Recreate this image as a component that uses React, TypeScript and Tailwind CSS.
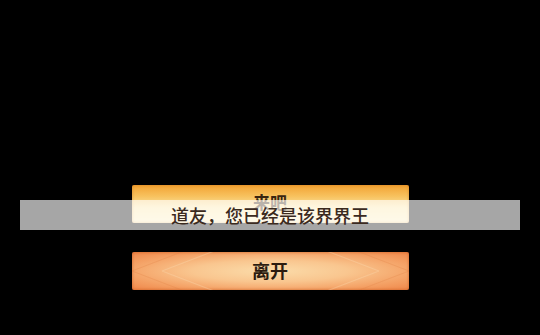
export default function App() {
  return (
    <div
      className="relative w-[540px] h-[335px] bg-black overflow-hidden"
      style={{ fontFamily: '"Noto Sans CJK SC", "Noto Sans", sans-serif' }}
    >
      {/* dialog buttons */}
      <div className="flex flex-col items-center pt-[185px] gap-[29px]">
        <button className="relative w-[277px] h-[38px] rounded-[2px] bg-[linear-gradient(180deg,#f2a232_0%,#f7c25f_30%,#fce6a6_60%,#fdf0c4_100%)] shadow-[inset_0_0_3px_rgba(200,110,20,0.6)]">
          <span className="block -mt-[5px] text-[17px] font-semibold text-[#3a2510] leading-none">来吧</span>
        </button>
        <button className="relative w-[277px] h-[38px] rounded-[2px] overflow-hidden bg-[radial-gradient(ellipse_at_center,#fbdcaa_0%,#f9c68f_40%,#f4a064_75%,#ef8649_100%)] shadow-[inset_0_0_3px_rgba(190,80,20,0.7)]">
          <svg className="absolute inset-0" width="277" height="38" viewBox="0 0 277 38">
            <path d="M0 19 L60 -4 M0 19 L60 42 M277 19 L217 -4 M277 19 L217 42" stroke="#e07a40" strokeWidth="1" opacity="0.25" fill="none" />
            <path d="M30 19 L90 -4 M30 19 L90 42 M247 19 L187 -4 M247 19 L187 42" stroke="#fde0b8" strokeWidth="1.2" opacity="0.3" fill="none" />
          </svg>
          <span className="relative text-[18px] font-semibold text-[#2c1c10] leading-none">离开</span>
        </button>
      </div>

      {/* toast */}
      <div className="absolute left-[20px] top-[200px] w-[500px] h-[30px] bg-white/65 flex items-center justify-center">
        <span className="text-[18px] font-medium text-[#3b2a1e] leading-none">道友，您已经是该界界王</span>
      </div>
    </div>
  );
}
